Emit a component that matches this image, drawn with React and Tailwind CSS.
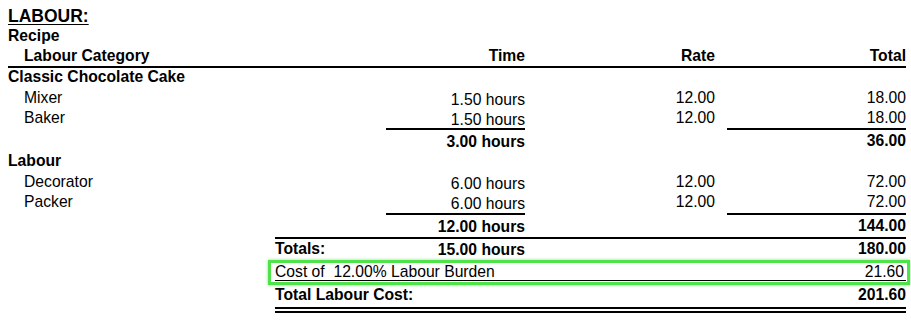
const cols = "grid grid-cols-[378px_139px_190px_191px]";
const subCols = "grid grid-cols-[111px_139px_190px_191px]";

const groups = [
  {
    name: "Classic Chocolate Cake",
    items: [
      { cat: "Mixer", time: "1.50 hours", rate: "12.00", total: "18.00" },
      { cat: "Baker", time: "1.50 hours", rate: "12.00", total: "18.00" },
    ],
    time: "3.00 hours",
    total: "36.00",
  },
  {
    name: "Labour",
    items: [
      { cat: "Decorator", time: "6.00 hours", rate: "12.00", total: "72.00" },
      { cat: "Packer", time: "6.00 hours", rate: "12.00", total: "72.00" },
    ],
    time: "12.00 hours",
    total: "144.00",
  },
];

function Item({ item }) {
  return (
    <div className={`${cols} h-[20px] items-center`}>
      <div className="pl-4">{item.cat}</div>
      <div className="text-right pt-[3px]">{item.time}</div>
      <div className="text-right">{item.rate}</div>
      <div className="text-right">{item.total}</div>
    </div>
  );
}

function Group({ group, first }) {
  return (
    <div>
      <div className={`font-bold flex items-center ${first ? "h-[17px]" : "h-[18px]"}`}>{group.name}</div>
      <div className={first ? "mt-[3px]" : "mt-[2px]"}>
        {group.items.map((item) => (
          <Item key={item.cat} item={item} />
        ))}
      </div>
      <div className={`${cols} h-[2px] ${first ? "" : "mt-px"}`}>
        <div />
        <div className="bg-black" />
        <div />
        <div className="bg-black ml-3" />
      </div>
      <div className={`${cols} h-[22px] items-center font-bold`}>
        <div />
        <div className="text-right pt-[2px]">{group.time}</div>
        <div />
        <div className="text-right">{group.total}</div>
      </div>
    </div>
  );
}

export default function App() {
  return (
    <div
      className="w-[911px] h-[321px] bg-white text-black text-[15.7px] leading-none pl-2 pt-[8px] overflow-hidden"
      style={{ fontFamily: '"Liberation Sans", Arial, sans-serif' }}
    >
      <div className="w-[898px]">
        <div className="h-[18px] flex items-center">
          <span className="font-bold text-[17.5px] underline underline-offset-[2px]">LABOUR:</span>
        </div>
        <div className="h-[20px] flex items-center font-bold">Recipe</div>
        <div className={`${cols} h-[22px] items-center font-bold border-b-2 border-black`}>
          <div className="pl-4">Labour Category</div>
          <div className="text-right">Time</div>
          <div className="text-right">Rate</div>
          <div className="text-right">Total</div>
        </div>

        {groups.map((g, i) => (
          <Group key={g.name} group={g} first={i === 0} />
        ))}

        <div className="ml-[267px]">
          <div className="h-[2px] bg-black" />
          <div className={`${subCols} h-[20px] items-center font-bold`}>
            <div>Totals:</div>
            <div className="text-right pt-[2px]">15.00 hours</div>
            <div />
            <div className="text-right">180.00</div>
          </div>
        </div>

        <div className="ml-[260px] mt-px w-[642px] border-[3px] border-[#4fe34a] shadow-[0_0_3px_rgba(60,200,60,0.6)] pl-[4px] pr-px pb-px">
          <div className="h-[18px] flex items-center justify-between border-b border-black pr-[2px]">
            <span>Cost of&nbsp; 12.00% Labour Burden</span>
            <span>21.60</span>
          </div>
        </div>

        <div className="ml-[267px]">
          <div className={`${subCols} h-[20px] items-center font-bold`}>
            <div className="col-span-2">Total Labour Cost:</div>
            <div />
            <div className="text-right">201.60</div>
          </div>
          <div className="mt-[2px] h-[2px] bg-black" />
          <div className="mt-[2px] h-[2px] bg-black" />
        </div>
      </div>
    </div>
  );
}
